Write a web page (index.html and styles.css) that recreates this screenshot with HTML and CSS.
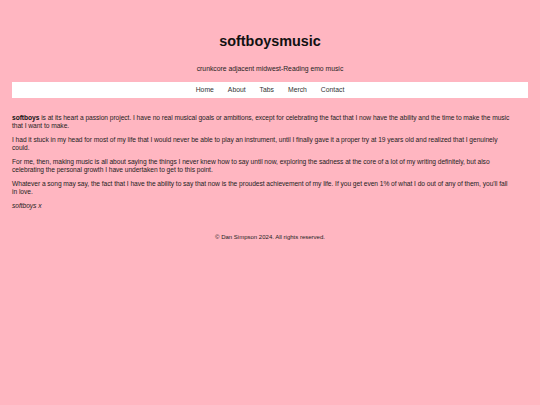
FILE: index.html
```html
<!DOCTYPE html>
<html lang="en">
<head>
<meta charset="utf-8">
<title>softboysmusic</title>
<link rel="stylesheet" href="styles.css">
</head>
<body>
<header class="site-header">
  <h1 class="site-title">softboysmusic</h1>
  <p class="tagline">crunkcore adjacent midwest-Reading emo music</p>
</header>
<nav class="site-nav">
  <a class="nav-link" href="#">Home</a>
  <a class="nav-link" href="#">About</a>
  <a class="nav-link" href="#">Tabs</a>
  <a class="nav-link" href="#">Merch</a>
  <a class="nav-link" href="#">Contact</a>
</nav>
<main class="content">
  <p><strong>softboys</strong> is at its heart a passion project. I have no real musical goals or ambitions, except for celebrating the fact that I now have the ability and the time to make the music that I want to make.</p>
  <p>I had it stuck in my head for most of my life that I would never be able to play an instrument, until I finally gave it a proper try at 19 years old and realized that I genuinely could.</p>
  <p>For me, then, making music is all about saying the things I never knew how to say until now, exploring the sadness at the core of a lot of my writing definitely, but also celebrating the personal growth I have undertaken to get to this point.</p>
  <p>Whatever a song may say, the fact that I have the ability to say that now is the proudest achievement of my life. If you get even 1% of what I do out of any of them, you'll fall in love.</p>
  <p class="signoff">softboys x</p>
</main>
<footer class="site-footer">
  <p class="copyright">&copy; Dan Simpson 2024. All rights reserved.</p>
</footer>
</body>
</html>
```
FILE: styles.css
```css
html, body {
  margin: 0;
  padding: 0;
}
body {
  background: #ffb6c1;
  color: #1e1e1e;
  font-family: "Liberation Sans", Arial, sans-serif;
  font-size: 6.8px;
  line-height: 7.5px;
  min-height: 405px;
}
.site-header {
  padding-top: 33px;
  text-align: center;
}
.site-title {
  margin: 0;
  font-size: 14.4px;
  line-height: 16px;
  font-weight: bold;
  color: #111;
}
.tagline {
  margin: 16px 0 0;
  line-height: 8px;
}
.site-nav {
  margin: 9px 12px 0;
  background: #fff;
  padding: 4px 0;
  line-height: 8px;
  display: flex;
  justify-content: center;
  gap: 14px;
}
.nav-link {
  color: #333;
  text-decoration: none;
}
.content {
  padding: 16px 12px 0;
  font-size: 6.67px;
  letter-spacing: -0.05px;
}
.content p {
  margin: 0 0 7px;
  max-width: 499px;
}
.content strong {
  color: #111;
}
.signoff {
  font-style: italic;
}
.site-footer {
  text-align: center;
  padding-top: 16px;
}
.copyright {
  margin: 0;
  font-size: 6px;
  line-height: 8px;
}
```
